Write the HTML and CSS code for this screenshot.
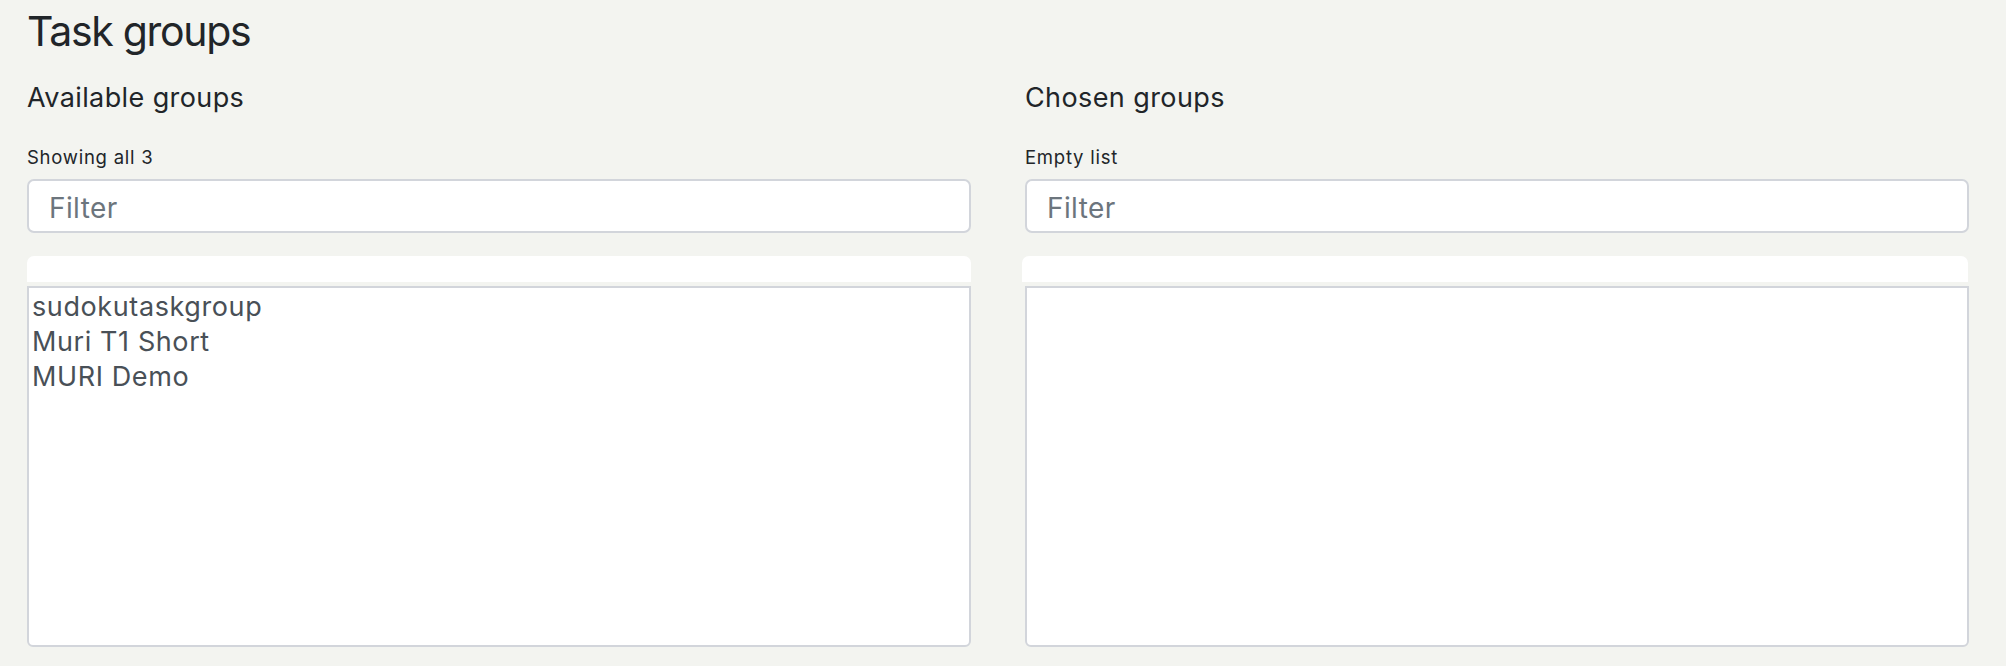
FILE: index.html
```html
<!DOCTYPE html>
<html lang="en">
<head>
<meta charset="utf-8">
<title>Task groups</title>
<link rel="stylesheet" href="styles.css">
</head>
<body>
<main class="page">
  <h1 class="title">Task groups</h1>
  <div class="columns">
    <section class="picker">
      <h2 class="picker-title">Available groups</h2>
      <div class="picker-count">Showing all 3</div>
      <input class="filter" type="text" placeholder="Filter">
      <div class="list-head"></div>
      <div class="list" role="listbox">
        <div class="option" role="option">sudokutaskgroup</div>
        <div class="option" role="option">Muri T1 Short</div>
        <div class="option" role="option">MURI Demo</div>
      </div>
    </section>
    <section class="picker">
      <h2 class="picker-title">Chosen groups</h2>
      <div class="picker-count">Empty list</div>
      <input class="filter" type="text" placeholder="Filter">
      <div class="list-head list-head-shift"></div>
      <div class="list" role="listbox"></div>
    </section>
  </div>
</main>
</body>
</html>
```

FILE: styles.css
```css
html, body {
  margin: 0;
  padding: 0;
  background: #f3f4f0;
}
body {
  font-family: Inter, "Noto Sans", "Liberation Sans", sans-serif;
  color: #212529;
}
.page {
  padding: 6px 37px 0 27px;
}
.title {
  margin: 0;
  font-size: 41px;
  line-height: 50px;
  font-weight: 400;
  letter-spacing: -1.3px;
}
.columns {
  display: grid;
  grid-template-columns: 1fr 1fr;
  column-gap: 54px;
  margin-top: 26px;
}
.picker {
  display: flex;
  flex-direction: column;
}
.picker-title {
  margin: 0;
  font-size: 27px;
  line-height: 32px;
  font-weight: 400;
  letter-spacing: 0.4px;
}
.picker-count {
  margin-top: 32px;
  font-size: 18.5px;
  line-height: 22px;
  letter-spacing: 0.75px;
}
.filter {
  box-sizing: border-box;
  margin: 11px 0 0;
  height: 54px;
  width: 100%;
  padding: 4px 20px 0;
  border: 2px solid #d2d5db;
  border-radius: 7px;
  background: #fff;
  font-family: inherit;
  font-size: 28px;
  letter-spacing: 0.4px;
  color: #495057;
  outline: none;
}
.filter::placeholder {
  color: #6c757d;
  opacity: 1;
}
.list-head {
  margin-top: 23px;
  height: 26px;
  background: #fff;
  border-radius: 7px 7px 0 0;
}
.list-head-shift {
  margin-left: -3px;
  margin-right: 1px;
}
.list {
  box-sizing: border-box;
  margin-top: 4px;
  height: 361px;
  padding: 1px 3px 0;
  border: 2px solid #d2d5db;
  border-radius: 0 0 6px 6px;
  background: #fff;
  color: #495057;
  font-size: 27px;
  line-height: 35px;
  letter-spacing: 0.6px;
}
.option {
  white-space: nowrap;
}
```
